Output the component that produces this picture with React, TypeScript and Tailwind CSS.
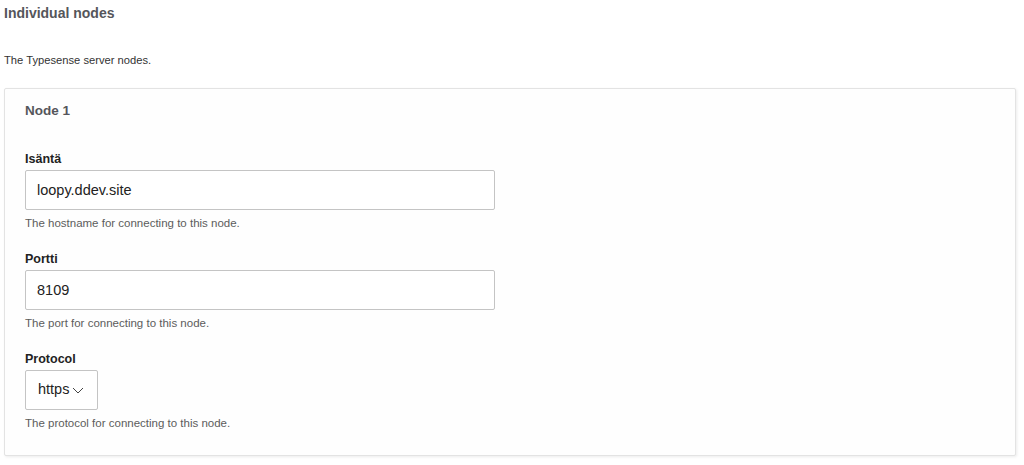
import { useState } from "react";

type Field = {
  label: string;
  value: string;
  help: string;
};

const fields: Field[] = [
  { label: "Isäntä", value: "loopy.ddev.site", help: "The hostname for connecting to this node." },
  { label: "Portti", value: "8109", help: "The port for connecting to this node." },
];

export default function App() {
  const [values, setValues] = useState(fields.map((f) => f.value));
  const [protocol, setProtocol] = useState("https");

  return (
    <div className="min-h-[465px] bg-white pl-[4px] pr-[8px] font-['Liberation_Sans',Arial,sans-serif]">
      <h2 className="pt-[3px] text-[14px] leading-[20px] font-bold text-[#55565b]">Individual nodes</h2>
      <p className="mt-[29px] text-[11.2px] leading-[16px] text-[#333]">The Typesense server nodes.</p>

      <div className="mt-[20px] h-[368px] rounded-[2px] border border-[#e3e3e3] bg-[#fefefe] pl-[20px] pt-[12px] shadow-[1px_1px_3px_rgba(0,0,0,0.08)]">
        <h3 className="text-[13.5px] leading-[20px] font-bold text-[#55565b]">Node 1</h3>

        <div className="mt-[30px] flex flex-col gap-[20px]">
          {fields.map((field, index) => (
            <div key={index} className="flex flex-col">
              <label className="mb-[3px] text-[12.5px] leading-[16px] font-bold text-[#222]">{field.label}</label>
              <input
                value={values[index]}
                onChange={(e) => {
                  const next = [...values];
                  next[index] = e.target.value;
                  setValues(next);
                }}
                className="h-[40px] w-[470px] rounded-[2px] border border-[#c4c4c4] bg-white pl-[11px] text-[14.5px] text-[#222] outline-none"
              />
              <p className="mt-[5px] text-[11.5px] leading-[16px] text-[#5c5c5c]">{field.help}</p>
            </div>
          ))}

          <div className="flex flex-col">
            <label className="mb-[3px] text-[12.5px] leading-[16px] font-bold text-[#222]">Protocol</label>
            <button
              onClick={() => setProtocol(protocol === "https" ? "http" : "https")}
              className="flex h-[40px] w-[73px] items-center rounded-[2px] border border-[#c4c4c4] bg-white pl-[12px] text-[14.5px] text-[#222]"
            >
              {protocol}
              <svg width="12" height="7" viewBox="0 0 12 7" className="ml-[3px] mt-[1px]">
                <path d="M1 1l5 5 5-5" fill="none" stroke="#444" strokeWidth="1" />
              </svg>
            </button>
            <p className="mt-[5px] text-[11.5px] leading-[16px] text-[#5c5c5c]">The protocol for connecting to this node.</p>
          </div>
        </div>
      </div>
    </div>
  );
}
